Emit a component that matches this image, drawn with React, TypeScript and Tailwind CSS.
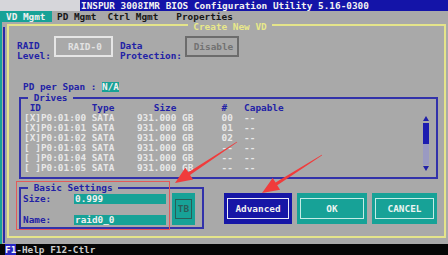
import React from "react";

const GRAY = "bg-[#a9a9a9]";

function Scrollbar() {
  return (
    <div className="w-[6px] mr-[7px] mt-[13px] flex flex-col items-center">
      <svg width="6" height="5" viewBox="0 0 6 5">
        <polygon points="3,0 6,5 0,5" fill="#2020a8" />
      </svg>
      <div className="w-[6px] h-[21px] mt-[2px] bg-[#1c1cb0]" />
      <div className="w-[6px] h-[21px] bg-[#9a9ac2]" />
      <svg width="6" height="5" viewBox="0 0 6 5" className="mt-[1px]">
        <polygon points="0,0 6,0 3,5" fill="#2020a8" />
      </svg>
    </div>
  );
}

export default function App() {
  const header =
    " ID" + " ".repeat(9) + "Type" + " ".repeat(7) + "Size" + " ".repeat(8) + "#" + "   " + "Capable";
  const drives: [string, string][] = [
    ["[X]P0:01:00", "00"],
    ["[X]P0:01:01", "01"],
    ["[X]P0:01:02", "02"],
    ["[ ]P0:01:03", "--"],
    ["[ ]P0:01:04", "--"],
    ["[ ]P0:01:05", "--"],
  ];
  const row = (id: string, n: string) =>
    id + " " + "SATA" + "    " + "931.000" + " " + "GB" + "     " + n + "  " + "--";

  return (
    <div className="relative w-[448px] h-[255px] overflow-hidden bg-[#a9a9a9] flex flex-col font-['DejaVu_Sans_Mono',monospace] font-bold text-[9.4px] leading-[10px] whitespace-pre">
      {/* title bar */}
      <div className="flex h-[11px] shrink-0">
        <div className="w-[80px] bg-[#d6d6da]" />
        <div className="flex-1 bg-[#1414a8] text-[#f2f2f2] leading-[11px] pl-[1px]">
          INSPUR 3008IMR BIOS Configuration Utility 5.16-0300
        </div>
      </div>

      {/* menu bar */}
      <div className="flex items-start h-[11px] shrink-0 text-[#161616]">
        <div className="w-[52px] h-[11px] bg-[#17a297] text-[#f0f0f0] pl-[6px] pt-[0.5px]">
          <div className="h-[10px] leading-[10px]">VD Mgmt</div>
        </div>
        <div className="ml-[5px] h-[10px] leading-[10px] mt-[0.5px]">PD Mgmt</div>
        <div className="ml-[11px] h-[10px] leading-[10px] mt-[0.5px]">Ctrl Mgmt</div>
        <div className="ml-[18px] h-[10px] leading-[10px] mt-[0.5px]">Properties</div>
      </div>

      {/* main */}
      <div className="flex flex-1 min-h-0">
        <div className="w-[2px] bg-[#17a297]" />
        <div className="w-[1.5px] ml-[1px] mt-[5px] mb-[1px] bg-[#2a2aa8]" />
        <div className="ml-[2.5px] mt-[2px] w-[439px] h-[214px] border-2 border-[#e4e48a] flex flex-col">
          {/* dialog title */}
          <div className={`self-center ml-[7px] -mt-[4.5px] h-[9px] leading-[9px] ${GRAY} text-[#e8e88a]`}>
            {" Create New VD "}
          </div>

          {/* RAID level row */}
          <div className="flex items-start mt-[5.5px] h-[21px]">
            <div className="ml-[8px] mt-[5px] text-[#2222a6] flex flex-col">
              <div className="h-[10px]">RAID</div>
              <div className="h-[10px]">Level:</div>
            </div>
            <div className="ml-[3px] w-[59px] h-[21px] border-2 border-[#e6e6e6] flex items-center justify-center pl-[3px] text-[#e2e2e2]">
              RAID-0
            </div>
            <div className="ml-[7px] mt-[5px] text-[#2222a6] flex flex-col">
              <div className="h-[10px]">Data</div>
              <div className="h-[10px]">Protection:</div>
            </div>
            <div className="ml-[3px] w-[54px] h-[21px] border-2 border-[#6c6c6c] flex items-center justify-center pl-[3px] text-[#727272]">
              Disable
            </div>
          </div>

          {/* PD per span */}
          <div className="mt-[25px] ml-[14px] h-[10px] flex text-[#2222a6]">
            <span>{"PD per Span : "}</span>
            <span className="bg-[#17a297] text-[#f0f0f0]">N/A</span>
          </div>

          {/* Drives box */}
          <div className="mt-[5px] ml-[10px] w-[419px] h-[82px] border-2 border-[#3232aa] flex flex-col">
            <div className={`-mt-[6px] ml-[7px] self-start h-[10px] ${GRAY} text-[#2222a6]`}>
              {" Drives "}
            </div>
            <div className="flex">
              <div className="flex-1 pl-[3px] flex flex-col">
                <div className="h-[10px] text-[#2222a6]">{header}</div>
                {drives.map(([id, n]) => (
                  <div key={id} className="h-[10px] text-[#e8e8e8]">
                    {row(id, n)}
                  </div>
                ))}
              </div>
              <Scrollbar />
            </div>
          </div>

          {/* bottom section */}
          <div className="flex items-start">
            <div className="mt-[8px] ml-[10px] w-[185px] h-[42px] border-2 border-[#3232aa] flex flex-col">
              <div className={`-mt-[6px] ml-[7px] self-start h-[10px] ${GRAY} text-[#2222a6]`}>
                {" Basic Settings "}
              </div>
              <div className="flex items-start">
                <div className="flex flex-col pt-[1px]">
                  <div className="flex h-[10px]">
                    <div className="w-[53px] pl-[2px] text-[#2222a6]">Size:</div>
                    <div className="w-[92px] h-[10px] bg-[#17a297] text-[#f0f0f0] pl-[1px]">0.999</div>
                  </div>
                  <div className="flex h-[10px] mt-[11px]">
                    <div className="w-[53px] pl-[2px] text-[#2222a6]">Name:</div>
                    <div className="w-[92px] h-[10px] bg-[#17a297] text-[#f0f0f0] pl-[1px]">raid0_0</div>
                  </div>
                </div>
                <div className="ml-[6px] w-[23px] h-[32px] bg-[#17a297] p-[3px] py-[6px]">
                  <div className="w-full h-full border-[1.5px] border-[#2b5d58] flex items-center justify-center text-[#2b5d58]">
                    TB
                  </div>
                </div>
              </div>
            </div>

            <div className="ml-[20px] mt-[14px] w-[68px] h-[31px] bg-[#1616a6] px-[3px] py-[5px]">
              <div className="w-full h-full border-[1.5px] border-[#ececf8] flex items-center justify-center text-[#f0f0f0]">
                Advanced
              </div>
            </div>
            <div className="ml-[5px] mt-[14px] w-[70px] h-[31px] bg-[#17a297] px-[3px] py-[5px]">
              <div className="w-full h-full border-[1.5px] border-[#c4ece6] flex items-center justify-center text-[#eaf4f2]">
                OK
              </div>
            </div>
            <div className="ml-[5px] mt-[14px] w-[65px] h-[31px] bg-[#17a297] px-[3px] py-[5px]">
              <div className="w-full h-full border-[1.5px] border-[#c4ece6] flex items-center justify-center text-[#eaf4f2]">
                CANCEL
              </div>
            </div>
          </div>
        </div>
      </div>

      {/* status bar */}
      <div className="h-[11px] shrink-0 bg-[#060606] flex items-center leading-[11px]">
        <span className="ml-[5px] bg-[#2626c2] text-[#f4f4f4]">F1</span>
        <span className="text-[#cdcdcd]">-Help F12-Ctlr</span>
      </div>

      {/* annotations */}
      <svg
        className="absolute left-0 top-0 pointer-events-none"
        width="448"
        height="255"
        viewBox="0 0 448 255"
      >
        <rect x="16.5" y="181.5" width="153" height="48" fill="none" stroke="#e25a5a" strokeWidth="1" />
        <polygon
          points="237.2,142.3 190.0,174.9 193.1,179.4 175,183 185.3,167.8 188.4,172.3 236.8,141.7"
          fill="#f03c3c"
        />
        <polygon
          points="322.2,155.3 277.2,185.2 280.1,189.8 262,193 272.7,178.0 275.6,182.6 321.8,154.7"
          fill="#f03c3c"
        />
      </svg>
    </div>
  );
}
